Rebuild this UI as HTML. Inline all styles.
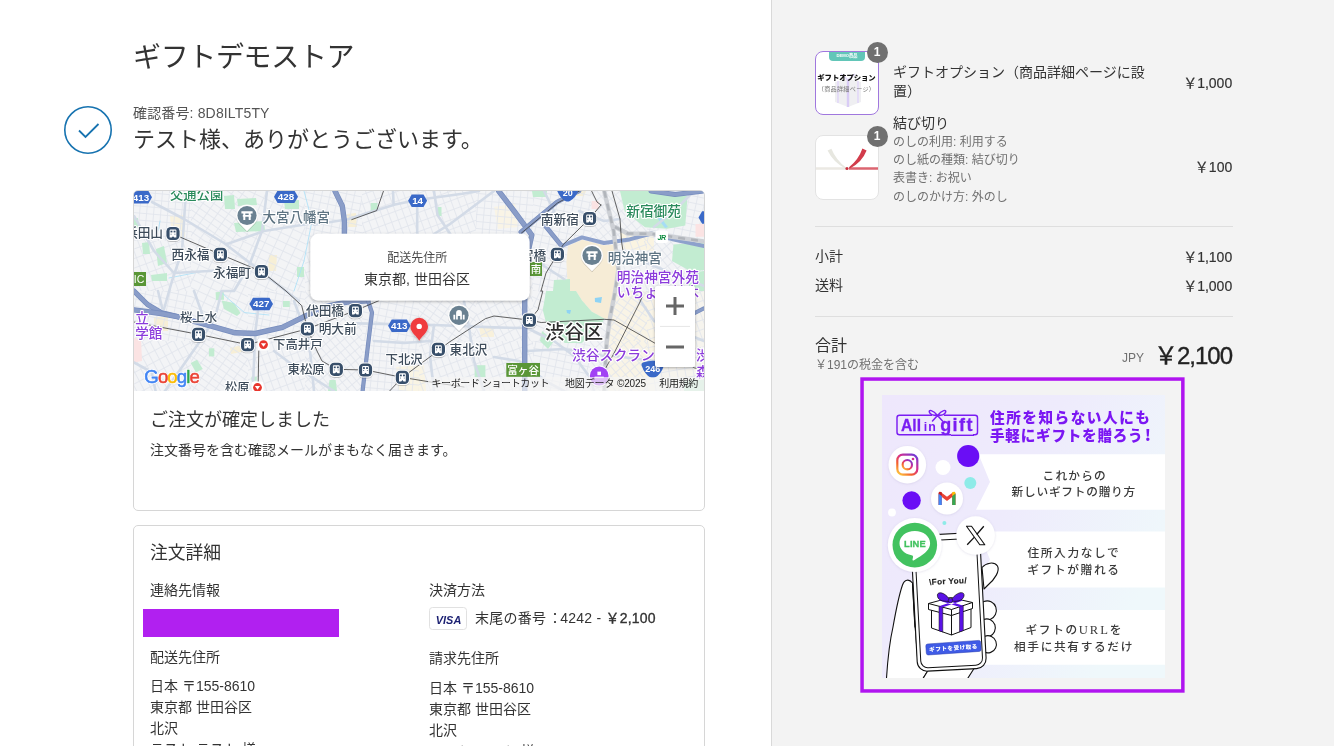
<!DOCTYPE html>
<html lang="ja">
<head>
<meta charset="utf-8">
<title>ギフトデモストア</title>
<style>
*{box-sizing:border-box;margin:0;padding:0}
html,body{width:1334px;height:746px;overflow:hidden;background:#fff}
body{font-family:"Liberation Sans","Noto Sans CJK JP",sans-serif;color:#333;font-size:14px;position:relative}
.abs{position:absolute;white-space:nowrap}
#left{position:absolute;left:0;top:0;width:771px;height:746px;will-change:transform}
#rightbg{position:absolute;left:771px;top:0;width:563px;height:746px;background:#f3f3f3;border-left:1px solid #d9d9d9}
#right{position:absolute;left:771px;top:0;width:563px;height:746px;border-left:1px solid transparent;will-change:transform}
.t{position:absolute;white-space:nowrap;line-height:1}
.card{position:absolute;border:1px solid #d6d6d6;border-radius:5px;background:#fff}
.badge{width:21.4px;height:21.4px;border-radius:11px;background:#707070;color:#fff;font-size:12px;font-weight:700;text-align:center;line-height:21.4px}
.r{right:101.8px;margin-top:1px;-webkit-text-stroke:0.2px #333}
</style>
</head>
<body>
<div id="rightbg"></div>
<div id="left">
  <div class="t" style="left:133px;top:44px;font-size:28px;color:#333;letter-spacing:-0.35px">ギフトデモストア</div>
  <svg class="abs" style="left:63px;top:105px" width="50" height="50" viewBox="0 0 50 50"><circle cx="25" cy="25" r="23.2" fill="none" stroke="#1773b0" stroke-width="1.6"/><path d="M16 25.5 L22.5 32 L35.5 19" fill="none" stroke="#1773b0" stroke-width="1.8"/></svg>
  <div class="t" style="left:133px;top:106px;font-size:14px;color:#545454;letter-spacing:0.15px">確認番号: 8D8ILT5TY</div>
  <div class="t" style="left:133px;top:128.5px;font-size:22px;color:#333">テスト様、ありがとうございます。</div>

  <div class="card" id="card1" style="left:133px;top:190px;width:572px;height:321px;overflow:hidden">
    <div id="map" style="position:absolute;left:0;top:0;width:570px;height:200px;overflow:hidden"><svg id="mapsvg" width="570" height="200" viewBox="0 0 570 200" style="position:absolute;left:0;top:0" font-family="'Liberation Sans','Noto Sans CJK JP',sans-serif">
<defs>
<pattern id="sp0" width="8" height="7" patternUnits="userSpaceOnUse" patternTransform="rotate(12)"><path d="M0 0.5H8M0.5 0V7" stroke="#e1e5ec" stroke-width="0.85" fill="none"/></pattern>
<pattern id="sp1" width="7" height="9" patternUnits="userSpaceOnUse" patternTransform="rotate(-20)"><path d="M0 0.5H7M0.5 0V9" stroke="#e1e5ec" stroke-width="0.85" fill="none"/></pattern>
<pattern id="sp2" width="9" height="6" patternUnits="userSpaceOnUse" patternTransform="rotate(35)"><path d="M0 0.5H9M0.5 0V6" stroke="#e1e5ec" stroke-width="0.85" fill="none"/></pattern>
<pattern id="sp3" width="6" height="8" patternUnits="userSpaceOnUse" patternTransform="rotate(-40)"><path d="M0 0.5H6M0.5 0V8" stroke="#e1e5ec" stroke-width="0.85" fill="none"/></pattern>
<pattern id="sp4" width="10" height="7" patternUnits="userSpaceOnUse" patternTransform="rotate(62)"><path d="M0 0.5H10M0.5 0V7" stroke="#e1e5ec" stroke-width="0.85" fill="none"/></pattern>
<pattern id="sp5" width="7" height="7" patternUnits="userSpaceOnUse" patternTransform="rotate(5)"><path d="M0 0.5H7M0.5 0V7" stroke="#e1e5ec" stroke-width="0.85" fill="none"/></pattern>
<pattern id="sp6" width="8" height="10" patternUnits="userSpaceOnUse" patternTransform="rotate(-65)"><path d="M0 0.5H8M0.5 0V10" stroke="#e1e5ec" stroke-width="0.85" fill="none"/></pattern>
<pattern id="sp7" width="9" height="8" patternUnits="userSpaceOnUse" patternTransform="rotate(80)"><path d="M0 0.5H9M0.5 0V8" stroke="#e1e5ec" stroke-width="0.85" fill="none"/></pattern>
<filter id="psh" x="-30%" y="-30%" width="160%" height="160%"><feDropShadow dx="0" dy="1" stdDeviation="1.6" flood-color="#000" flood-opacity="0.3"/></filter>
<filter id="ish" x="-30%" y="-30%" width="160%" height="160%"><feDropShadow dx="0" dy="0.6" stdDeviation="0.7" flood-color="#000" flood-opacity="0.35"/></filter>
<g id="st"><rect x="-7.6" y="-7.6" width="15.2" height="15.2" rx="5.4" fill="#fff"/><rect x="-6.6" y="-6.6" width="13.2" height="13.2" rx="4.5" fill="#374f6b"/><path d="M-3.4 -3.1 a1 1 0 0 1 1 -1 h4.8 a1 1 0 0 1 1 1 v7.1 h-2.2 l-1.2 -1.3 l-1.2 1.3 h-2.2z" fill="#fff"/><rect x="-2.5" y="-2.8" width="1.9" height="1.7" fill="#374f6b"/><rect x="0.6" y="-2.8" width="1.9" height="1.7" fill="#374f6b"/><rect x="-2.4" y="0.3" width="1" height="0.7" fill="#374f6b"/><rect x="1.4" y="0.3" width="1" height="0.7" fill="#374f6b"/></g>
<g id="rs"><rect x="-6" y="-6" width="12" height="12" rx="2.5" fill="#fff"/><circle r="4.4" fill="#e8362e"/><path d="M-2.6 -1.4h5.2l-2.6 3.6z" fill="#fff"/></g>
<g id="torii"><path d="M0 15.8 L-7.6 7.9 A11 11 0 1 1 7.6 7.9Z" fill="#fff"/><circle r="9.6" fill="#6b8191"/><path d="M-5.6 -4.2h11.2v2.1h-11.2z M-4.2 -0.4h8.4v1.7h-8.4z M-3.7 -2.2h2v6.8h-2z M1.7 -2.2h2v6.8h-2z" fill="#fff"/></g>
<g id="museum"><path d="M0 15.8 L-7.6 7.9 A11 11 0 1 1 7.6 7.9Z" fill="#fff"/><circle r="9.6" fill="#6b8191"/><path d="M-5.6 -0.5h1.8v4.6h-1.8z M3.8 -0.5h1.8v4.6h-1.8z M-2.9 -2.2 a2.9 3 0 0 1 5.8 0 v6.3h-1.7v-3.4h-2.4v3.4h-1.7z" fill="#fff"/></g>
</defs>
<rect width="570" height="200" fill="#f3f4f6"/>
<path d="M479 100 L521 100 L525 140 L521 200 L470 200 L472 150Z" fill="#faf4e2" opacity="0.8"/>
<path d="M486 40 L520 44 L520 60 L488 58Z" fill="#faf4e2" />
<path d="M36 25 L50 24 L51 46 L38 47Z" fill="#f8f2de" />
<path d="M135 64 L143 64 L142 80 L134 80Z" fill="#f7efd6" />
<path d="M213 23 L222 22 L223 36 L214 36Z" fill="#f7efd6" />
<path d="M360 16 L381 12 L384 36 L364 38Z" fill="#f9f4e6" />
<path d="M440 0 L452 0 L450 5 L441 5Z" fill="#f7efd6" />
<path d="M262 176 L290 174 L292 200 L264 200Z" fill="#f9f4e4" />
<path d="M345 136 L360 136 L360 146 L347 146Z" fill="#f8f1dc" />
<path d="M96 157 L112 153 L113 160 L97 163Z" fill="#f7efd6" />
<path d="M20 126 L34 126 L34 140 L20 140Z" fill="#f7efd6" />
<path d="M520 100 L570 100 L570 200 L520 200Z" fill="#f8f4ea" opacity="0.6"/>
<rect x="0" y="0" width="57" height="50" fill="url(#sp5)"/>
<rect x="57" y="0" width="57" height="50" fill="url(#sp2)"/>
<rect x="114" y="0" width="57" height="50" fill="url(#sp6)"/>
<rect x="171" y="0" width="57" height="50" fill="url(#sp0)"/>
<rect x="228" y="0" width="57" height="50" fill="url(#sp1)"/>
<rect x="285" y="0" width="57" height="50" fill="url(#sp1)"/>
<rect x="342" y="0" width="57" height="50" fill="url(#sp5)"/>
<rect x="399" y="0" width="57" height="50" fill="url(#sp0)"/>
<rect x="456" y="0" width="57" height="50" fill="url(#sp3)"/>
<rect x="513" y="0" width="57" height="50" fill="url(#sp0)"/>
<rect x="0" y="50" width="57" height="50" fill="url(#sp1)"/>
<rect x="57" y="50" width="57" height="50" fill="url(#sp6)"/>
<rect x="114" y="50" width="57" height="50" fill="url(#sp6)"/>
<rect x="171" y="50" width="57" height="50" fill="url(#sp1)"/>
<rect x="228" y="50" width="57" height="50" fill="url(#sp3)"/>
<rect x="285" y="50" width="57" height="50" fill="url(#sp1)"/>
<rect x="342" y="50" width="57" height="50" fill="url(#sp6)"/>
<rect x="399" y="50" width="57" height="50" fill="url(#sp0)"/>
<rect x="456" y="50" width="57" height="50" fill="url(#sp1)"/>
<rect x="513" y="50" width="57" height="50" fill="url(#sp3)"/>
<rect x="0" y="100" width="57" height="50" fill="url(#sp0)"/>
<rect x="57" y="100" width="57" height="50" fill="url(#sp6)"/>
<rect x="114" y="100" width="57" height="50" fill="url(#sp0)"/>
<rect x="171" y="100" width="57" height="50" fill="url(#sp3)"/>
<rect x="228" y="100" width="57" height="50" fill="url(#sp0)"/>
<rect x="285" y="100" width="57" height="50" fill="url(#sp2)"/>
<rect x="342" y="100" width="57" height="50" fill="url(#sp4)"/>
<rect x="399" y="100" width="57" height="50" fill="url(#sp6)"/>
<rect x="456" y="100" width="57" height="50" fill="url(#sp2)"/>
<rect x="513" y="100" width="57" height="50" fill="url(#sp1)"/>
<rect x="0" y="150" width="57" height="50" fill="url(#sp4)"/>
<rect x="57" y="150" width="57" height="50" fill="url(#sp2)"/>
<rect x="114" y="150" width="57" height="50" fill="url(#sp1)"/>
<rect x="171" y="150" width="57" height="50" fill="url(#sp3)"/>
<rect x="228" y="150" width="57" height="50" fill="url(#sp5)"/>
<rect x="285" y="150" width="57" height="50" fill="url(#sp1)"/>
<rect x="342" y="150" width="57" height="50" fill="url(#sp1)"/>
<rect x="399" y="150" width="57" height="50" fill="url(#sp0)"/>
<rect x="456" y="150" width="57" height="50" fill="url(#sp3)"/>
<rect x="513" y="150" width="57" height="50" fill="url(#sp7)"/>
<path d="M434 55 L448 48.8 L470 54.3 L481 53.5 L484 76 L482 100 L477 128 L470 127.6 L457.6 120.5 L448 109.4 L442 100 L434 100 L432.4 71Z" fill="#f6ecd6" />
<path d="M412 100 L442 100 L448 109.4 L457.6 120.5 L470.2 127.6 L468.6 131.5 L448 152 L430.8 152 L412 131.5 L408.8 119Z" fill="#c2ecd1" />
<path d="M486 0 L517 0 L519 3 L553.6 4.7 L551.3 34.6 L533 37.8 L511 36.2 L490.7 20.5Z" fill="#c2ecd1" />
<path d="M539.5 53.5 L570 51 L570 79 L558 81 L538 70Z" fill="#c2ecd1" />
<path d="M553 82 L570 80 L570 100 L556 100Z" fill="#c2ecd1" />
<path d="M398 0 L413 0 L412 6 L399 6Z" fill="#c2ecd1" />
<path d="M420 89 L436 88 L436 100 L419 100Z" fill="#c2ecd1" />
<path d="M408 140 L420 150 L414 158 L406 150Z" fill="#c2ecd1" />
<path d="M90 5 L100 4 L101 18 L91 18Z" fill="#c2ecd1" />
<path d="M103 8 L122 7 L123 14 L104 15Z" fill="#c2ecd1" />
<path d="M100 32 L130 30 L131 40 L102 41Z" fill="#c2ecd1" />
<path d="M150 10 L165 9 L165 18 L151 18Z" fill="#c2ecd1" />
<path d="M0 27 L4 27 L4 37 L0 37Z" fill="#c2ecd1" />
<path d="M8 52 L15 51 L16 63 L9 63Z" fill="#c2ecd1" />
<path d="M22 58 L30 55 L33 72 L24 75Z" fill="#c2ecd1" />
<path d="M17 84 L33 82 L33 90 L18 90Z" fill="#c2ecd1" />
<path d="M163 76 L170 76 L170 86 L163 86Z" fill="#c2ecd1" />
<path d="M236.7 12 L243.4 12 L243.4 20 L236.7 20Z" fill="#c2ecd1" />
<path d="M303.5 16 L307.5 16 L307.5 25 L303.5 25Z" fill="#c2ecd1" />
<path d="M81.6 101.3 L89.7 100.5 L90 108.8 L82 109Z" fill="#c2ecd1" />
<path d="M87.7 109.4 L100 112 L106.6 122 L103 125 L90 118Z" fill="#c2ecd1" />
<path d="M149 110 L155.8 110 L155.8 116 L149 116Z" fill="#c2ecd1" />
<path d="M74.9 157.3 L80.3 157.3 L80.3 165.4 L74.9 165.4Z" fill="#c2ecd1" />
<path d="M56.7 172 L63 168.8 L68.8 178 L62 181.6Z" fill="#c2ecd1" />
<path d="M0 156.7 L5.4 156.7 L5.4 164 L0 164Z" fill="#c2ecd1" />
<path d="M117.4 185.7 L122.8 185.7 L122.8 189.7 L117.4 189.7Z" fill="#c2ecd1" />
<path d="M340.6 174.2 L351.4 174.2 L351.4 186.4 L340.6 186.4Z" fill="#c2ecd1" />
<path d="M195.5 189 L201.6 189 L203 200 L194 200Z" fill="#c2ecd1" />
<path d="M315 100 L321 100 L321 104 L315 104Z" fill="#c2ecd1" />
<path d="M550 190 L570 188 L570 200 L550 200Z" fill="#c2ecd1" />
<path d="M457.6 10 L464.7 10 L464.7 18 L457.6 18Z" fill="#fbe3e3" />
<path d="M561.5 33 L570 33 L570 45.7 L561.5 45.7Z" fill="#fbe3e3" />
<path d="M0 147 L7 148 L8 170 L0 171.5Z" fill="#fbe3e3" />
<path d="M460.8 107 L468 106 L467 112 L461 111Z" fill="#8fd3f4" />
<path d="M432.4 119 L437 119 L436 123 L433 122Z" fill="#8fd3f4" />
<path d="M521 24 L524 23 L534 36 L531 37Z" fill="#a6dcf5" />
<path d="M170 0 L178 30 L170 70 L160 100" fill="none" stroke="#a9dff7" stroke-width="0.8" stroke-linejoin="round" stroke-linecap="round" />
<path d="M35 87 L70 80" fill="none" stroke="#a9dff7" stroke-width="0.8" stroke-linejoin="round" stroke-linecap="round" />
<path d="M86 100 L94.5 108 L110.6 121.6 L135 124" fill="none" stroke="#a9dff7" stroke-width="0.8" stroke-linejoin="round" stroke-linecap="round" />
<path d="M26 30 L24 40" fill="none" stroke="#a9dff7" stroke-width="0.8" stroke-linejoin="round" stroke-linecap="round" />
<path d="M18 11 L50 28 L90 52 L120 75 L152 100 L165 110" fill="none" stroke="#d3dbe7" stroke-width="2.6" stroke-linejoin="round" stroke-linecap="round" />
<path d="M180 32 L130 40 L93 53" fill="none" stroke="#d3dbe7" stroke-width="2.6" stroke-linejoin="round" stroke-linecap="round" />
<path d="M52 0 L48 60 L38 90 L30 118" fill="none" stroke="#d3dbe7" stroke-width="2.6" stroke-linejoin="round" stroke-linecap="round" />
<path d="M0 25 L20 60 L40 82 L75 80 L100 78" fill="none" stroke="#d3dbe7" stroke-width="2.6" stroke-linejoin="round" stroke-linecap="round" />
<path d="M133 0 L128 40 L115 75 L100 100 L87.7 100 L81 127 L63.4 154 L44.5 181 L31 200" fill="none" stroke="#d3dbe7" stroke-width="2.6" stroke-linejoin="round" stroke-linecap="round" />
<path d="M180 33.7 L213.7 28.3 L261 13.5 L283 9 L328.4 2.7 L345 0" fill="none" stroke="#d3dbe7" stroke-width="2.6" stroke-linejoin="round" stroke-linecap="round" />
<path d="M259 0 L259.6 13.5" fill="none" stroke="#d3dbe7" stroke-width="2.6" stroke-linejoin="round" stroke-linecap="round" />
<path d="M283.2 17 L283.2 43" fill="none" stroke="#d3dbe7" stroke-width="2.6" stroke-linejoin="round" stroke-linecap="round" />
<path d="M300 0 L303.5 24 L316.3 43" fill="none" stroke="#d3dbe7" stroke-width="2.6" stroke-linejoin="round" stroke-linecap="round" />
<path d="M360 0 L340 15 L315 33.7 L300 43" fill="none" stroke="#d3dbe7" stroke-width="2.6" stroke-linejoin="round" stroke-linecap="round" />
<path d="M223 132.4 L300 134 L360 136.4 L388 137" fill="none" stroke="#d3dbe7" stroke-width="2.6" stroke-linejoin="round" stroke-linecap="round" />
<path d="M124 120 L121.4 140 L118.7 200" fill="none" stroke="#d3dbe7" stroke-width="2.6" stroke-linejoin="round" stroke-linecap="round" />
<path d="M24 100 L28.3 117.5" fill="none" stroke="#d3dbe7" stroke-width="2.6" stroke-linejoin="round" stroke-linecap="round" />
<path d="M0 171.5 L17.5 181 L21.6 200" fill="none" stroke="#d3dbe7" stroke-width="2.6" stroke-linejoin="round" stroke-linecap="round" />
<path d="M393 137 L420 150 L440 165 L455 185 L460 200" fill="none" stroke="#d3dbe7" stroke-width="2.6" stroke-linejoin="round" stroke-linecap="round" />
<path d="M393 160 L430 158 L470 165" fill="none" stroke="#d3dbe7" stroke-width="2.6" stroke-linejoin="round" stroke-linecap="round" />
<path d="M300 134 L296 165 L300 200" fill="none" stroke="#d3dbe7" stroke-width="2.6" stroke-linejoin="round" stroke-linecap="round" />
<path d="M330 110 L335 136 L340 170 L350 200" fill="none" stroke="#d3dbe7" stroke-width="2.6" stroke-linejoin="round" stroke-linecap="round" />
<path d="M360 166 L385 170 L415 192 L430 200" fill="none" stroke="#d3dbe7" stroke-width="2.6" stroke-linejoin="round" stroke-linecap="round" />
<path d="M240 150 L270 152 L296 150" fill="none" stroke="#d3dbe7" stroke-width="2.6" stroke-linejoin="round" stroke-linecap="round" />
<path d="M160 110 L175 150 L180 200" fill="none" stroke="#d3dbe7" stroke-width="2.6" stroke-linejoin="round" stroke-linecap="round" />
<path d="M140 160 L160 175 L200 200" fill="none" stroke="#d3dbe7" stroke-width="2.6" stroke-linejoin="round" stroke-linecap="round" />
<path d="M60 100 L70 128" fill="none" stroke="#d3dbe7" stroke-width="2.6" stroke-linejoin="round" stroke-linecap="round" />
<path d="M395 60 L410 75 L430 88" fill="none" stroke="#d3dbe7" stroke-width="2.6" stroke-linejoin="round" stroke-linecap="round" />
<path d="M485 60 L520 75 L570 95" fill="none" stroke="#d3dbe7" stroke-width="2.6" stroke-linejoin="round" stroke-linecap="round" />
<path d="M500 100 L520 130 L570 150" fill="none" stroke="#d3dbe7" stroke-width="2.6" stroke-linejoin="round" stroke-linecap="round" />
<path d="M480 165 L520 170 L570 160" fill="none" stroke="#d3dbe7" stroke-width="2.6" stroke-linejoin="round" stroke-linecap="round" />
<path d="M520 36 L540 20 L560 0" fill="none" stroke="#d3dbe7" stroke-width="2.6" stroke-linejoin="round" stroke-linecap="round" />
<path d="M410 0 L420 20 L411 32" fill="none" stroke="#d3dbe7" stroke-width="2.6" stroke-linejoin="round" stroke-linecap="round" />
<path d="M445 20 L470 30 L486 28" fill="none" stroke="#d3dbe7" stroke-width="2.6" stroke-linejoin="round" stroke-linecap="round" />
<path d="M201 0 L208.3 15 L210.4 30 L210.4 44" fill="none" stroke="#768cbd" stroke-width="5.4" stroke-linejoin="round" stroke-linecap="round" />
<path d="M201 0 L208.3 15 L210.4 30 L210.4 44" fill="none" stroke="#8a9dc8" stroke-width="4.0" stroke-linejoin="round" stroke-linecap="round" />
<path d="M364.7 0 L380 20 L397.8 44 L392 70 L390.7 110 L390.7 200" fill="none" stroke="#768cbd" stroke-width="5.4" stroke-linejoin="round" stroke-linecap="round" />
<path d="M364.7 0 L380 20 L397.8 44 L392 70 L390.7 110 L390.7 200" fill="none" stroke="#8a9dc8" stroke-width="4.0" stroke-linejoin="round" stroke-linecap="round" />
<path d="M445 0 L423 11 L386.8 41" fill="none" stroke="#768cbd" stroke-width="4.6" stroke-linejoin="round" stroke-linecap="round" />
<path d="M445 0 L423 11 L386.8 41" fill="none" stroke="#8a9dc8" stroke-width="3.1999999999999997" stroke-linejoin="round" stroke-linecap="round" />
<path d="M410.4 33.8 L427.7 55" fill="none" stroke="#768cbd" stroke-width="4.6" stroke-linejoin="round" stroke-linecap="round" />
<path d="M410.4 33.8 L427.7 55" fill="none" stroke="#8a9dc8" stroke-width="3.1999999999999997" stroke-linejoin="round" stroke-linecap="round" />
<path d="M0 100 L13.5 113.5 L27 121.6 L43.2 125.6" fill="none" stroke="#768cbd" stroke-width="5.2" stroke-linejoin="round" stroke-linecap="round" />
<path d="M0 100 L13.5 113.5 L27 121.6 L43.2 125.6" fill="none" stroke="#8a9dc8" stroke-width="3.8000000000000003" stroke-linejoin="round" stroke-linecap="round" />
<path d="M0 118.9 L27 122.5 L43.2 125.6 L67.5 132.4 L101.2 141.8 L121.4 142.5 L148.4 136.4 L168.7 126.3 L191.6 115.6 L213 111 L234 109.7" fill="none" stroke="#768cbd" stroke-width="5.4" stroke-linejoin="round" stroke-linecap="round" />
<path d="M0 118.9 L27 122.5 L43.2 125.6 L67.5 132.4 L101.2 141.8 L121.4 142.5 L148.4 136.4 L168.7 126.3 L191.6 115.6 L213 111 L234 109.7" fill="none" stroke="#8a9dc8" stroke-width="4.0" stroke-linejoin="round" stroke-linecap="round" />
<path d="M234 109.7 L238 121.6 L234 154 L228.6 200" fill="none" stroke="#768cbd" stroke-width="4.2" stroke-linejoin="round" stroke-linecap="round" />
<path d="M234 109.7 L238 121.6 L234 154 L228.6 200" fill="none" stroke="#8a9dc8" stroke-width="2.8000000000000003" stroke-linejoin="round" stroke-linecap="round" />
<path d="M517 0 L541 3.5 L570 0" fill="none" stroke="#768cbd" stroke-width="5" stroke-linejoin="round" stroke-linecap="round" />
<path d="M517 0 L541 3.5 L570 0" fill="none" stroke="#8a9dc8" stroke-width="3.6" stroke-linejoin="round" stroke-linecap="round" />
<path d="M560.7 122 L570 117.3" fill="none" stroke="#768cbd" stroke-width="4" stroke-linejoin="round" stroke-linecap="round" />
<path d="M560.7 122 L570 117.3" fill="none" stroke="#8a9dc8" stroke-width="2.6" stroke-linejoin="round" stroke-linecap="round" />
<path d="M427.7 55 L448 46.4 L470 52 L493.8 48.8 L517.4 42.5 L541 48.8 L570 55" fill="none" stroke="#8da1cc" stroke-width="3.9" stroke-linejoin="round" stroke-linecap="round" />
<path d="M470.2 0 L479.6 39.4 L484.4 78.7 L481.2 100 L475.7 128.3 L472.6 152 L471 178.7 L470.2 200" fill="none" stroke="#cdd0d5" stroke-width="4.4" stroke-linejoin="round" stroke-linecap="round" />
<path d="M470.2 0 L479.6 39.4 L484.4 78.7 L481.2 100 L475.7 128.3 L472.6 152 L471 178.7 L470.2 200" fill="none" stroke="#b1b5bb" stroke-width="2.6" stroke-linejoin="round" stroke-linecap="butt" stroke-dasharray="7 6"/>
<path d="M481 36 L493.8 42.5 L517.4 42.8 L570 50.4" fill="none" stroke="#cdd0d5" stroke-width="4.4" stroke-linejoin="round" stroke-linecap="round" />
<path d="M481 36 L493.8 42.5 L517.4 42.8 L570 50.4" fill="none" stroke="#b1b5bb" stroke-width="2.6" stroke-linejoin="round" stroke-linecap="butt" stroke-dasharray="7 6"/>
<path d="M46 46 L86.4 63.4 L127.5 80.5 L152 100 L167.7 114.6 L173.4 137.8 L183 160 L188 170 L202.3 178.3 L231.5 179 L268.4 186.4 L301.4 191.8 L330 196" fill="none" stroke="#3c3c3c" stroke-width="0.8" stroke-linejoin="round" stroke-linecap="round" />
<path d="M249.5 0 L242.7 19.6 L217.8 28.6" fill="none" stroke="#3c3c3c" stroke-width="0.8" stroke-linejoin="round" stroke-linecap="round" />
<path d="M0 131 L13.5 133.7 L64.5 143.4 L113.6 153.6 L166 139.8 L173.4 137.8 L221.4 119.6 L244.8 109.7" fill="none" stroke="#3c3c3c" stroke-width="0.8" stroke-linejoin="round" stroke-linecap="round" />
<path d="M124.8 160 L124.1 196" fill="none" stroke="#3c3c3c" stroke-width="0.8" stroke-linejoin="round" stroke-linecap="round" />
<path d="M255.6 200 L268.4 186.4 L297.4 164.8 L315 151.3 L351.4 127.7 L360 125 L395.4 129.1 L404 118.9 L408.8 100 L407 100" fill="none" stroke="#3c3c3c" stroke-width="0.8" stroke-linejoin="round" stroke-linecap="round" />
<path d="M467 14 L455.6 27.5 L429.3 53.5 L423.4 63.3 L412 82 L407 100" fill="none" stroke="#3c3c3c" stroke-width="0.8" stroke-linejoin="round" stroke-linecap="round" />
<path d="M395.4 129.1 L407.2 131.5 L470.2 128.3 L480 129 L520.6 152 L560.7 177 L570 178.5" fill="none" stroke="#3c3c3c" stroke-width="0.8" stroke-linejoin="round" stroke-linecap="round" />
<path d="M508 106.3 L506 111 L479.6 163 L470 180" fill="none" stroke="#3c3c3c" stroke-width="0.8" stroke-linejoin="round" stroke-linecap="round" />
<path d="M478 0 L486 28 L487.5 50.4 L489 60" fill="none" stroke="#3c3c3c" stroke-width="0.8" stroke-linejoin="round" stroke-linecap="round" />
<path d="M457.6 0 L463 11 L467 14" fill="none" stroke="#3c3c3c" stroke-width="0.8" stroke-linejoin="round" stroke-linecap="round" />
<path d="M445.5 0 L423.5 12 L387.5 42" fill="none" stroke="#3c3c3c" stroke-width="0.8" stroke-linejoin="round" stroke-linecap="round" />
<path d="M-4.0 6.3 l3.6 -6.3 h14.8 l3.6 6.3 l-3.6 6.3 h-14.8z" fill="#3a69c8"/>
<text x="7" y="9.7" font-size="9.8" font-weight="700" fill="#fff" text-anchor="middle">413</text>
<path d="M140.0 5.8 l3.6 -6.3 h16.8 l3.6 6.3 l-3.6 6.3 h-16.8z" fill="#3a69c8"/>
<text x="152" y="9.2" font-size="9.8" font-weight="700" fill="#fff" text-anchor="middle">428</text>
<path d="M274.1 9.8 l3.6 -6.3 h11.8 l3.6 6.3 l-3.6 6.3 h-11.8z" fill="#3a69c8"/>
<text x="283.6" y="13.200000000000001" font-size="9.8" font-weight="700" fill="#fff" text-anchor="middle">14</text>
<path d="M115.4 113 l3.6 -6.3 h16.400000000000002 l3.6 6.3 l-3.6 6.3 h-16.400000000000002z" fill="#3a69c8"/>
<text x="127.2" y="116.4" font-size="9.8" font-weight="700" fill="#fff" text-anchor="middle">427</text>
<path d="M254.10000000000002 134.7 l3.6 -6.3 h15.2 l3.6 6.3 l-3.6 6.3 h-15.2z" fill="#3a69c8"/>
<text x="265.3" y="138.1" font-size="9.8" font-weight="700" fill="#fff" text-anchor="middle">413</text>
<path d="M423.7 -5 q10 -3.5 20 0 q2 0.8 1.2 3 q-3 9 -9 12 q-2.2 1.2 -4.4 0 q-6 -3 -9 -12 q-0.8 -2.2 1.2 -3z" fill="#3a69c8"/>
<text x="433.7" y="4.6" font-size="9" font-weight="700" fill="#fff" text-anchor="middle">20</text>
<path d="M508.79999999999995 171.5 q10 -3.5 20 0 q2 0.8 1.2 3 q-3 9 -9 12 q-2.2 1.2 -4.4 0 q-6 -3 -9 -12 q-0.8 -2.2 1.2 -3z" fill="#3a69c8"/>
<text x="518.8" y="181.1" font-size="9" font-weight="700" fill="#fff" text-anchor="middle">246</text>
<path d="M564.5 26.5 l3.6 -6.3 h11.8 l3.6 6.3 l-3.6 6.3 h-11.8z" fill="#3a69c8"/>
<text x="574" y="29.9" font-size="9.8" font-weight="700" fill="#fff" text-anchor="middle"></text>
<rect x="-2" y="81" width="14" height="14" fill="#5a9637"/>
<text x="5.0" y="91.78" font-size="10.5" font-weight="500" fill="#fff" text-anchor="middle">IC</text>
<rect x="396" y="71" width="12" height="14" fill="#5a9637"/>
<text x="402.0" y="81.78" font-size="10.5" font-weight="500" fill="#fff" text-anchor="middle">南</text>
<rect x="372.3" y="172" width="33.7" height="13.8" fill="#5a9637"/>
<text x="389.15000000000003" y="182.716" font-size="10.6" font-weight="500" fill="#fff" text-anchor="middle">富ヶ谷</text>
<text x="36" y="7.5" font-size="13.3" font-weight="500" fill="#2a8a5c" text-anchor="start" stroke="#fff" stroke-width="2.2" stroke-linejoin="round" paint-order="stroke">交通公園</text>
<text x="128.5" y="30.8" font-size="13.5" font-weight="500" fill="#5d7382" text-anchor="start" stroke="#fff" stroke-width="2.2" stroke-linejoin="round" paint-order="stroke">大宮八幡宮</text>
<text x="-9" y="46" font-size="12.7" font-weight="500" fill="#3e4c5b" text-anchor="start" stroke="#fff" stroke-width="2.2" stroke-linejoin="round" paint-order="stroke">浜田山</text>
<text x="37.5" y="68.2" font-size="12.7" font-weight="500" fill="#3e4c5b" text-anchor="start" stroke="#fff" stroke-width="2.2" stroke-linejoin="round" paint-order="stroke">西永福</text>
<text x="79" y="85.5" font-size="12.7" font-weight="500" fill="#3e4c5b" text-anchor="start" stroke="#fff" stroke-width="2.2" stroke-linejoin="round" paint-order="stroke">永福町</text>
<text x="406.8" y="32.8" font-size="12.7" font-weight="500" fill="#3e4c5b" text-anchor="start" stroke="#fff" stroke-width="2.2" stroke-linejoin="round" paint-order="stroke">南新宿</text>
<text x="374.2" y="69" font-size="12.7" font-weight="500" fill="#3e4c5b" text-anchor="start" stroke="#fff" stroke-width="2.2" stroke-linejoin="round" paint-order="stroke">参宮橋</text>
<text x="473.7" y="72" font-size="13.5" font-weight="500" fill="#5d7382" text-anchor="start" stroke="#fff" stroke-width="2.2" stroke-linejoin="round" paint-order="stroke">明治神宮</text>
<text x="492.2" y="25" font-size="13.7" font-weight="500" fill="#2a8a5c" text-anchor="start" stroke="#fff" stroke-width="2.2" stroke-linejoin="round" paint-order="stroke">新宿御苑</text>
<text x="482.8" y="91" font-size="13.7" font-weight="500" fill="#8b3bdb" text-anchor="start" stroke="#fff" stroke-width="2.2" stroke-linejoin="round" paint-order="stroke">明治神宮外苑</text>
<text x="482.8" y="106" font-size="13.7" font-weight="500" fill="#8b3bdb" text-anchor="start" stroke="#fff" stroke-width="2.2" stroke-linejoin="round" paint-order="stroke">いちょう並木</text>
<text x="1.3" y="132" font-size="13.5" font-weight="500" fill="#8b3bdb" text-anchor="start" stroke="#fff" stroke-width="2.2" stroke-linejoin="round" paint-order="stroke">立</text>
<text x="1.3" y="147" font-size="13.5" font-weight="500" fill="#8b3bdb" text-anchor="start" stroke="#fff" stroke-width="2.2" stroke-linejoin="round" paint-order="stroke">学館</text>
<text x="45.9" y="130.6" font-size="12.4" font-weight="500" fill="#3e4c5b" text-anchor="start" stroke="#fff" stroke-width="2.2" stroke-linejoin="round" paint-order="stroke">桜上水</text>
<text x="139" y="158.3" font-size="12.4" font-weight="500" fill="#3e4c5b" text-anchor="start" stroke="#fff" stroke-width="2.2" stroke-linejoin="round" paint-order="stroke">下高井戸</text>
<text x="172" y="124.2" font-size="12.7" font-weight="500" fill="#3e4c5b" text-anchor="start" stroke="#fff" stroke-width="2.2" stroke-linejoin="round" paint-order="stroke">代田橋</text>
<text x="184.7" y="141.8" font-size="12.7" font-weight="500" fill="#3e4c5b" text-anchor="start" stroke="#fff" stroke-width="2.2" stroke-linejoin="round" paint-order="stroke">明大前</text>
<text x="153.6" y="183.3" font-size="12.4" font-weight="500" fill="#3e4c5b" text-anchor="start" stroke="#fff" stroke-width="2.2" stroke-linejoin="round" paint-order="stroke">東松原</text>
<text x="251.5" y="173.2" font-size="12.4" font-weight="500" fill="#3e4c5b" text-anchor="start" stroke="#fff" stroke-width="2.2" stroke-linejoin="round" paint-order="stroke">下北沢</text>
<text x="315.6" y="162.6" font-size="12.6" font-weight="500" fill="#3e4c5b" text-anchor="start" stroke="#fff" stroke-width="2.2" stroke-linejoin="round" paint-order="stroke">東北沢</text>
<text x="91" y="200.6" font-size="12.2" font-weight="500" fill="#3e4c5b" text-anchor="start" stroke="#fff" stroke-width="2.2" stroke-linejoin="round" paint-order="stroke">松原</text>
<text x="411" y="148" font-size="19.4" font-weight="500" fill="#2d2d2d" text-anchor="start" stroke="#fff" stroke-width="2.6" stroke-linejoin="round" paint-order="stroke">渋谷区</text>
<text x="438" y="169" font-size="13.8" font-weight="500" fill="#8b3bdb" text-anchor="start" stroke="#fff" stroke-width="2.2" stroke-linejoin="round" paint-order="stroke">渋谷スクランブルスクエア</text>
<text x="562" y="169" font-size="13.8" font-weight="500" fill="#8b3bdb" text-anchor="start" stroke="#fff" stroke-width="2.2" stroke-linejoin="round" paint-order="stroke">渋</text>
<text x="562" y="186" font-size="13.8" font-weight="500" fill="#8b3bdb" text-anchor="start" stroke="#fff" stroke-width="2.2" stroke-linejoin="round" paint-order="stroke">森</text>
<use href="#st" x="39" y="42.5" filter="url(#ish)"/>
<use href="#st" x="86.4" y="63.4" filter="url(#ish)"/>
<use href="#st" x="127.5" y="80.5" filter="url(#ish)"/>
<use href="#st" x="455.6" y="27.5" filter="url(#ish)"/>
<use href="#st" x="423.4" y="63.3" filter="url(#ish)"/>
<use href="#st" x="64.5" y="143.4" filter="url(#ish)"/>
<use href="#st" x="113.6" y="153.6" filter="url(#ish)"/>
<use href="#st" x="173.4" y="137.8" filter="url(#ish)"/>
<use href="#st" x="221.4" y="119.6" filter="url(#ish)"/>
<use href="#st" x="202.3" y="178.3" filter="url(#ish)"/>
<use href="#st" x="231.5" y="179" filter="url(#ish)"/>
<use href="#st" x="268.4" y="186.4" filter="url(#ish)"/>
<use href="#st" x="304.4" y="158.3" filter="url(#ish)"/>
<use href="#st" x="395.4" y="129.1" filter="url(#ish)"/>
<use href="#rs" x="129.5" y="153.6" />
<use href="#rs" x="123.5" y="196.5" />
<use href="#torii" x="113" y="24.5" filter="url(#ish)"/>
<use href="#torii" x="458" y="64.5" filter="url(#ish)"/>
<use href="#museum" x="325" y="124.3" filter="url(#ish)"/>
<g filter="url(#ish)"><circle cx="465.2" cy="185" r="10.6" fill="#fff"/><circle cx="465.2" cy="185" r="9.4" fill="#a142f4"/><rect x="463.4" y="180.6" width="3.6" height="3.6" fill="#fff"/><rect x="460.6" y="185.6" width="9.2" height="1.5" fill="#fff" opacity="0.9"/></g>
<rect x="521.4" y="39.4" width="12.6" height="12.6" rx="2.5" fill="#fff"/><text x="527.7" y="48.6" font-size="7" font-weight="700" font-style="italic" fill="#0b8a3e" text-anchor="middle" letter-spacing="-0.3">JR</text>
<g filter="url(#psh)"><path d="M285.2 149.8 C283 145.5 276.4 141.5 276.4 135.6 A8.8 8.8 0 0 1 294 135.6 C294 141.5 287.4 145.5 285.2 149.8Z" fill="#f03a3e"/><circle cx="285.2" cy="135.4" r="2.7" fill="#fff"/></g>
<g filter="url(#psh)"><rect x="176.4" y="42.8" width="219.2" height="66.8" rx="8" fill="#fff"/></g>
<text x="283.3" y="71.1" font-size="12" fill="#4a4a4a" text-anchor="middle">配送先住所</text>
<text x="283" y="92.8" font-size="14" fill="#333" text-anchor="middle">東京都, 世田谷区</text>
<rect x="521" y="95" width="40" height="81" rx="2" fill="#fff" filter="url(#psh)"/>
<path d="M532 115h18M541 106v18M532 155.9h18" stroke="#666" stroke-width="3"/><path d="M526 135.4h30" stroke="#e6e6e6" stroke-width="1"/>
<rect x="294" y="186" width="276" height="14" fill="#f5f5f5" opacity="0.7"/>
<g font-size="10" fill="#222">
<text x="297.5" y="195.8" textLength="118" lengthAdjust="spacing">キーボード ショートカット</text>
<text x="431" y="195.8" textLength="81" lengthAdjust="spacing">地図データ ©2025</text>
<text x="525.3" y="195.8" textLength="39" lengthAdjust="spacing">利用規約</text>
</g>
<text x="10.3" y="191.6" font-size="18.6" letter-spacing="-0.9" stroke="#fff" stroke-width="2" stroke-linejoin="round" fill="#fff">Google</text>
<text x="10.3" y="191.6" font-size="18.6" letter-spacing="-0.9" stroke-width="0.55"><tspan fill="#4285f4" stroke="#4285f4">G</tspan><tspan fill="#ea4335" stroke="#ea4335">o</tspan><tspan fill="#fbbc05" stroke="#fbbc05">o</tspan><tspan fill="#4285f4" stroke="#4285f4">g</tspan><tspan fill="#34a853" stroke="#34a853">l</tspan><tspan fill="#ea4335" stroke="#ea4335">e</tspan></text>
</svg></div>
    <div class="t" style="left:16px;top:219.8px;font-size:18px">ご注文が確定しました</div>
    <div class="t" style="left:16px;top:252px;font-size:14px">注文番号を含む確認メールがまもなく届きます。</div>
  </div>

  <div class="card" id="card2" style="left:133px;top:525px;width:572px;height:260px">
    <div class="t" style="left:16px;top:18.6px;font-size:17.8px">注文詳細</div>
    <div class="t" style="left:16px;top:57px;font-size:14px">連絡先情報</div>
    <div class="abs" style="left:9.4px;top:82.5px;width:195.2px;height:28.8px;background:#b120f0"></div>
    <div class="t" style="left:16px;top:124px;font-size:14px">配送先住所</div>
    <div class="t" style="left:16px;top:150px;font-size:14px;line-height:21px">日本 〒155-8610<br>東京都 世田谷区<br>北沢<br>テスト テスト 様</div>
    <div class="t" style="left:295px;top:57px;font-size:14px">決済方法</div>
    <div class="abs" style="left:295.4px;top:80.6px;width:37.6px;height:23.4px;border:1px solid #e1e1e1;border-radius:3.5px;background:#fff"><svg width="36" height="22" viewBox="0 0 36 22" style="position:absolute;left:0;top:0"><text x="5.8" y="15.6" font-size="11.4" font-weight="700" font-style="italic" fill="#1a1f71" textLength="25.5" lengthAdjust="spacingAndGlyphs" font-family="'Liberation Sans',sans-serif">VISA</text></svg></div>
    <div class="t" style="left:341px;top:85px;font-size:14px;letter-spacing:0.22px">末尾の番号<span style="position:relative;left:2px">：</span>4242 - <span style="-webkit-text-stroke:0.35px #333">￥2,100</span></div>
    <div class="t" style="left:295px;top:125px;font-size:14px">請求先住所</div>
    <div class="t" style="left:295px;top:152px;font-size:14px;line-height:21px">日本 〒155-8610<br>東京都 世田谷区<br>北沢<br>テスト テスト 様</div>
  </div>
</div>
<div id="right">
  <!-- thumbnails -->
  <div class="abs" id="th1" style="left:43px;top:51px;width:64px;height:64px;border:1.3px solid #a077de;border-radius:8px;background:#fff;overflow:hidden">
    <div class="abs" style="left:13px;top:-1px;width:36px;height:10px;background:#62c6b8;border-radius:0 0 4px 4px;color:#fff;font-size:4.2px;line-height:10.5px;text-align:center;font-weight:700">DEMO商品</div>
    <svg class="abs" style="left:16.5px;top:20px" width="30" height="36" viewBox="0 0 30 36"><path d="M2 10 L15 7 L28 10 L28 30 L15 35 L2 30Z" fill="#efeff2"/><path d="M15 7 L15 35" stroke="#d9ccf6" stroke-width="2.4"/><path d="M5 9 L5 31 M25 9 L25 31" stroke="#e2d8f8" stroke-width="1.6"/><path d="M15 8 L8 2 M15 8 L22 2" stroke="#e2d8f8" stroke-width="1.6"/></svg>
    <div class="t" style="left:0;width:61px;top:21.7px;text-align:center;font-size:7.4px;font-weight:900;color:#111;letter-spacing:-0.1px">ギフトオプション</div>
    <div class="t" style="left:0;width:61px;top:33.5px;text-align:center;font-size:6.1px;color:#777;letter-spacing:0.3px">（商品詳細ページ）</div>
  </div>
  <div class="abs badge" style="left:94.5px;top:41.6px">1</div>
  <div class="abs" id="th2" style="left:43px;top:135px;width:64.4px;height:65px;border:1px solid #e3e3e3;border-radius:8px;background:#fff;overflow:hidden">
    <svg class="abs" style="left:0;top:0" width="62" height="62" viewBox="0 0 62 62"><path d="M0 32.5 H30" stroke="#ebe9e3" stroke-width="2.6"/><path d="M33 32.5 H62" stroke="#db6570" stroke-width="2.6"/><path d="M11.6 14.6 L15.4 12.8 Q20 24 30 31.6 L29.2 32.6 Q17 26 11.6 14.6Z" fill="#e7e7e0"/><path d="M46.4 12.6 L50.6 14.6 Q46 26.5 34 32.4 L33 31.2 Q42.5 24 46.4 12.6Z" fill="#d23c4b"/><circle cx="31" cy="32.5" r="1.6" fill="#c8303e"/></svg>
  </div>
  <div class="abs badge" style="left:94.5px;top:126px">1</div>

  <div class="t" style="left:121px;top:63px;font-size:14px;line-height:18.5px;white-space:normal;width:262px;color:#333">ギフトオプション（商品詳細ページに設置）</div>
  <div class="t r" style="top:75px;font-size:14px">￥1,000</div>

  <div class="t" style="left:121px;top:116px;font-size:14px">結び切り</div>
  <div class="t" style="left:121px;top:133px;font-size:12px;line-height:18.2px;color:#707070">のしの利用: 利用する<br>のし紙の種類: 結び切り<br>表書き: お祝い<br>のしのかけ方: 外のし</div>
  <div class="t r" style="top:159px;font-size:14px">￥100</div>

  <div class="abs" style="left:43px;top:226px;width:418px;height:1px;background:#dedede"></div>
  <div class="t" style="left:43px;top:249px;font-size:14px">小計</div>
  <div class="t r" style="top:249px;font-size:14px">￥1,100</div>
  <div class="t" style="left:43px;top:278px;font-size:14px">送料</div>
  <div class="t r" style="top:278px;font-size:14px">￥1,000</div>
  <div class="abs" style="left:43px;top:316px;width:418px;height:1px;background:#dedede"></div>
  <div class="t" style="left:43px;top:338px;font-size:16px">合計</div>
  <div class="t" style="left:43px;top:359px;font-size:12px;color:#707070">￥191の税金を含む</div>
  <div class="t" style="left:350px;top:352px;font-size:12px;color:#707070">JPY</div>
  <div class="t" style="right:102px;top:343.6px;font-size:24px;color:#222;letter-spacing:-1px;-webkit-text-stroke:0.35px #222">￥2,100</div>

  <svg class="abs" id="banner" style="left:88px;top:377px" width="326" height="317" viewBox="0 0 326 317"><rect x="2.05" y="2.05" width="320.8" height="311.9" fill="none" stroke="#b014f0" stroke-width="3.5"/></svg>
<svg class="abs" id="bannerimg" style="left:110px;top:394.5px" width="283" height="283" viewBox="0 0 283 283" font-family="'Liberation Sans','Noto Sans CJK JP',sans-serif">
<defs>
<linearGradient id="bg1" x1="0" y1="0" x2="1" y2="0.55"><stop offset="0" stop-color="#eee7fc"/><stop offset="0.5" stop-color="#eeebfc"/><stop offset="1" stop-color="#eff8fb"/></linearGradient>
<linearGradient id="ig" x1="0.1" y1="1" x2="0.9" y2="0"><stop offset="0" stop-color="#fdc53c"/><stop offset="0.3" stop-color="#f4602f"/><stop offset="0.6" stop-color="#d62f8d"/><stop offset="1" stop-color="#6f3bd8"/></linearGradient>
<filter id="sh" x="-20%" y="-20%" width="140%" height="140%"><feDropShadow dx="0" dy="0.5" stdDeviation="1" flood-color="#8a7fb0" flood-opacity="0.25"/></filter>
<clipPath id="bclip"><rect width="283" height="283"/></clipPath>
</defs>
<g clip-path="url(#bclip)">
<rect width="283" height="283" fill="url(#bg1)"/>
<!-- stripes -->
<path d="M96.5 59.2 H283 V114.7 H94 L108 87Z" fill="#fff"/>
<path d="M96.5 136.4 H283 V192.6 H94 L108 164.5Z" fill="#fff"/>
<path d="M96.5 214.9 H283 V269.8 H94 L108 242.3Z" fill="#fff"/>
<!-- logo -->
<rect x="15" y="20.3" width="80.5" height="19.4" rx="2.5" fill="none" stroke="#7a1df2" stroke-width="1.45"/>
<rect x="50" y="19" width="12" height="3" fill="#ebe3fc"/>
<path d="M55.5 20.5 C51 15 46 14 47.5 17.5 C48.5 20 52 20.5 55.5 20.5 C59 20.5 62.5 20 63.5 17.5 C65 14 60 15 55.5 20.5 M55.5 20.5 L50.5 26 M55.5 20.5 L60.5 26" fill="none" stroke="#7a1df2" stroke-width="1.5" stroke-linecap="round"/>
<text x="19" y="36.4" font-size="17" font-weight="700" fill="#7a1df2" stroke="#7a1df2" stroke-width="0.3" textLength="20" lengthAdjust="spacingAndGlyphs">All</text>
<text x="41.8" y="36.4" font-size="12.4" font-weight="700" fill="#7a1df2" letter-spacing="1.1">in</text>
<text x="58.2" y="36.2" font-size="18" font-weight="700" fill="#7a1df2" stroke="#7a1df2" stroke-width="0.3" letter-spacing="1.4">gift</text>
<rect x="69" y="38.6" width="22" height="2" fill="#ebe3fc"/>
<path d="M69 40.3 H92" stroke="#7a1df2" stroke-width="1.4"/>
<!-- heading -->
<text x="108" y="28.3" font-size="14.6" font-weight="900" fill="#7b16f3" letter-spacing="1.55">住所を知らない人にも</text>
<text x="108" y="45.8" font-size="14.6" font-weight="900" fill="#7b16f3" letter-spacing="0.75">手軽にギフトを贈ろう<tspan dx="1.2" font-family="'Noto Sans CJK JP',sans-serif" font-size="15.5">!</tspan></text>
<!-- body text -->
<g font-size="11.7" font-weight="500" fill="#3a3a3a" text-anchor="middle">
<text x="192.8" y="84.5" letter-spacing="1.2">これからの</text>
<text x="191.8" y="100.8" letter-spacing="0.75">新しいギフトの贈り方</text>
<text x="191.9" y="161.8" letter-spacing="1.65">住所入力なしで</text>
<text x="191.9" y="178.6" letter-spacing="1.65">ギフトが贈れる</text>
<text x="192.3" y="239" letter-spacing="1.65">ギフトの<tspan font-family="'Liberation Serif',serif" font-size="12.6" font-weight="400" letter-spacing="1.9">URL</tspan>を</text>
<text x="192" y="255.6" letter-spacing="1.65">相手に共有するだけ</text>
</g>
<!-- dots -->
<circle cx="86.2" cy="61" r="11.1" fill="#6a0ef5"/>
<circle cx="61" cy="72.5" r="7.5" fill="#fff"/>
<circle cx="88.3" cy="87.9" r="6" fill="#8eebe8"/>
<circle cx="29.6" cy="105.5" r="9.2" fill="#6a0ef5"/>
<circle cx="10" cy="117.5" r="3.9" fill="#fff"/>
<circle cx="62.4" cy="128" r="2" fill="#8eebe8"/>
<!-- instagram -->
<circle cx="25.3" cy="69.7" r="18.8" fill="#fff" filter="url(#sh)"/>
<rect x="15.3" y="59.7" width="20" height="20" rx="5.6" fill="none" stroke="url(#ig)" stroke-width="2.2"/>
<circle cx="25.3" cy="69.7" r="4.7" fill="none" stroke="url(#ig)" stroke-width="2.1"/>
<circle cx="31" cy="64" r="1.3" fill="#d62f8d"/>
<!-- gmail -->
<circle cx="65" cy="103.5" r="16" fill="#fff" filter="url(#sh)"/>
<path d="M56.5 110 V98.5 L58.6 97 L65 101.8 L71.4 97 L73.5 98.5 V110 H70.2 V102 L65 105.9 L59.8 102 V110Z" fill="#ea4335"/>
<path d="M56.5 110 V98.5 L59.8 101 V110Z" fill="#4285f4"/>
<path d="M73.5 110 V98.5 L70.2 101 V110Z" fill="#34a853"/>
<path d="M56.5 98.5 C56.5 96.5 58.3 96.2 59.8 97.3 V101Z" fill="#c5221f"/>
<path d="M73.5 98.5 C73.5 96.5 71.7 96.2 70.2 97.3 V101Z" fill="#fbbc04"/>
<!-- hand back + phone -->
<g stroke="#111" stroke-width="1.1" fill="#fff" stroke-linejoin="round" stroke-linecap="round">
<path d="M4 290 L4.5 283 C6 260 8 245 11 232 C14 215 17 200 20.5 190 C22.5 184.5 27 183.5 30.5 188 L33 230 L36 268 C38 274 42 276 46 275.5 L37 290Z"/>
<path d="M100 172.5 C104 168 112 166 115.5 171 C118 176 113 184 106 190 L102 194Z"/>
<ellipse cx="105" cy="215.5" rx="9.3" ry="9.6" transform="rotate(25 105 215.5)"/>
<ellipse cx="104.5" cy="233" rx="8.8" ry="9.2" transform="rotate(25 104.5 233)"/>
<ellipse cx="105.8" cy="249.3" rx="8.6" ry="8.6" transform="rotate(25 105.8 249.3)"/>
<path d="M46 275.5 L37 290 H81.5 L93.6 271Z"/>
<g transform="rotate(-3 66 205)">
<rect x="32" y="139" width="69" height="136" rx="10"/>
<rect x="35.6" y="144.6" width="61.8" height="127" rx="7" stroke-width="1"/>

</g>
<path d="M30.5 188 C31.5 205 32 220 33 232" fill="none"/>
</g>
<!-- for you -->
<g transform="rotate(-3 66 186)"><text x="66" y="189" font-size="8.2" font-weight="700" fill="#222" text-anchor="middle" letter-spacing="0.35" stroke="#222" stroke-width="0.15">\For You/</text></g>
<!-- gift -->
<g stroke="#111" stroke-width="1" stroke-linejoin="round" fill="#fff">
<path d="M49.5 214 L49.5 233 L69.5 240 L89 232.5 L89 213 L69.5 220Z"/>
<path d="M69.5 220 V240"/>
<path d="M46.5 208.5 L68.5 202.5 L90.5 207.5 L90.5 213.5 L69.5 220.5 L46.5 214.5Z"/>
<path d="M46.5 208.5 L69.5 214.5 L90.5 207.5 M69.5 214.5 V220.5" fill="none"/>
</g>
<path d="M57 211.2 L60.8 212.2 V237 L57 235.7Z M77.5 212 L81.3 210.7 V235.5 L77.5 237Z" fill="#5a12e6" stroke="#111" stroke-width="0.5"/>
<path d="M57 211.2 L77 204.5 L81 205.5 L60.8 212.2Z M81.3 210.7 L60 204 L56.5 205.2 L77.5 212Z" fill="#5a12e6"/>
<path d="M68.5 206 C63 196 54 196 55.5 201.5 C56.5 206 63 207 68.5 206 C74 207 81 206 82 201 C83 195.5 74 196.5 68.5 206Z" fill="#5a12e6" stroke="#111" stroke-width="0.7"/>
<circle cx="68.5" cy="205.5" r="2.2" fill="#5a12e6" stroke="#111" stroke-width="0.6"/>
<!-- button -->
<g transform="rotate(-4 71.4 252.8)"><rect x="44" y="247.2" width="55" height="11" rx="2" fill="#3f5be6" stroke="#2a3fb0" stroke-width="0.5"/><text x="71.5" y="255" font-size="5.6" font-weight="900" fill="#fff" text-anchor="middle" letter-spacing="0.5">ギフトを受け取る</text></g>
<g transform="translate(0 -0.7)"><!-- LINE -->
<circle cx="32.8" cy="150.8" r="27" fill="#fff" filter="url(#sh)"/>
<circle cx="32.8" cy="150.8" r="22.3" fill="#42c25f"/>
<path transform="translate(0 -0.8)" d="M32.8 137.5 C24 137.5 17.5 143 17.5 149.8 C17.5 155.8 22.5 160.5 29.5 161.8 C31 162 31.2 162.8 31 163.8 L30.5 166 C30.3 167 31 167.3 32 166.7 C35 165 41 161.5 44.5 157.8 C46.8 155.5 48.1 152.8 48.1 149.8 C48.1 143 41.6 137.5 32.8 137.5Z" fill="#fff"/>
<text x="32.9" y="152.6" font-size="9.3" font-weight="700" fill="#42c25f" stroke="#42c25f" stroke-width="0.3" text-anchor="middle" letter-spacing="0.1">LINE</text>
<!-- X -->
<circle cx="93.6" cy="141.2" r="19.3" fill="#fff" filter="url(#sh)"/>
<path d="M84.5 132 H89.5 L102.8 150.5 H97.8Z" fill="#fff" stroke="#111" stroke-width="1.1" stroke-linejoin="round"/>
<path d="M101.8 132 L94.7 140.2 M92.4 142.8 L85.2 150.5" stroke="#111" stroke-width="1.3" fill="none"/>
</g>
</g>
</svg>

</div>
</body>
</html>
